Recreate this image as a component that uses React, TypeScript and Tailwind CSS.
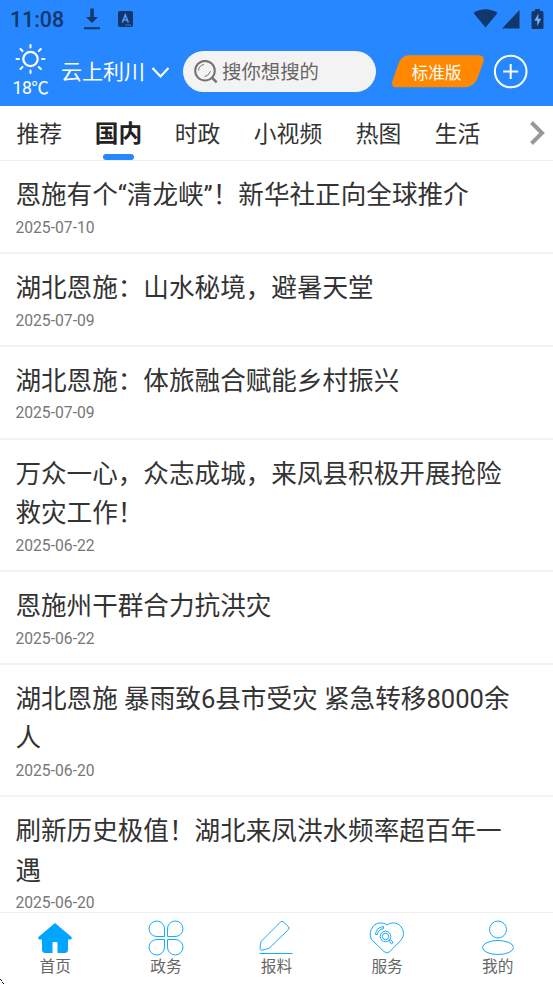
import { useState } from 'react';

const articles = [
  { title: '恩施有个“清龙峡”！新华社正向全球推介', date: '2025-07-10' },
  { title: '湖北恩施：山水秘境，避暑天堂', date: '2025-07-09' },
  { title: '湖北恩施：体旅融合赋能乡村振兴', date: '2025-07-09' },
  { title: '万众一心，众志成城，来凤县积极开展抢险救灾工作！', date: '2025-06-22' },
  { title: '恩施州干群合力抗洪灾', date: '2025-06-22' },
  { title: '湖北恩施 暴雨致6县市受灾 紧急转移8000余人', date: '2025-06-20' },
  { title: '刷新历史极值！湖北来凤洪水频率超百年一遇', date: '2025-06-20' },
];

const categories = ['推荐', '国内', '时政', '小视频', '热图', '生活'];

function StatusBar() {
  return (
    <div className="flex h-[38px] items-center pl-[10px] pr-[9px] text-[#12376b]">
      <span className="w-[74px] pt-px text-[21.3px] font-medium leading-[38px]">11:08</span>
      <svg width="16" height="22" viewBox="0 0 16 22" fill="currentColor">
        <path d="M6.300 .5h3.500v8.500H14l-6 6-6-6h4.300zM0 19.200h16v2H0z" />
      </svg>
      <svg className="ml-[18px]" width="16" height="17" viewBox="0 0 16 17">
        <rect x="0" y="0" width="15" height="16" rx="1.800" fill="currentColor" />
        <path d="M4.300 11.500 7.300 4 10.300 11.500M5.500 9h3.700" fill="none" stroke="#4d9bff" strokeWidth="1.600" />
        <path d="M7.500 14h6" stroke="#4d9bff" strokeDasharray="1.300 .7" />
      </svg>
      <div className="flex-1" />
      <svg width="25" height="20" viewBox="0 0 25 20" fill="currentColor">
        <path d="M.5 4C7.500 -1 17.500 -1 24.500 4L12.500 18.500z" />
      </svg>
      <svg className="ml-[4px]" width="18" height="19" viewBox="0 0 18 19" fill="currentColor">
        <path d="M17.500 0v18.500H0z" />
      </svg>
      <svg className="ml-[11px]" width="13" height="21" viewBox="0 0 13 21">
        <path d="M4 0h5v2h2q1.500 0 1.500 1.500v15q0 1.500-1.500 1.500H2Q.5 20 .5 18.500V3.500Q.5 2 2 2h2z" fill="currentColor" />
        <path d="M7.500 4.500 3.300 11.800h2.900v5.500l3.900-7.600H7.300z" fill="#70b0ff" />
      </svg>
    </div>
  );
}

function SunIcon() {
  return (
    <svg width="32" height="32" viewBox="-16 -16 32 32" fill="none" stroke="white" strokeLinecap="round">
      <circle cx="-0.500" r="7.200" strokeWidth="2.200" />
      <path
        strokeWidth="2"
        d="M-.5-14v2.500M-.5 11.500v2.500M-14.500 0h2.500M11 0h2.500M-10.500-10l2 2M7.800 8l2 2M-10.500 10l2-2M7.800-8l2-2"
      />
    </svg>
  );
}

function Header() {
  return (
    <header className="h-[106px] shrink-0 bg-[#2787ff] text-white">
      <StatusBar />
      <div className="flex h-[68px] items-start">
        <div className="ml-[8px] flex w-[45px] flex-col items-center pt-[5px]">
          <SunIcon />
          <span className="mt-px text-[17.6px] leading-[24px] tracking-[-0.5px]">18℃</span>
        </div>
        <span className="ml-[8px] mt-[18px] w-[90px] whitespace-nowrap text-[21px] leading-[32px]">云上利川</span>
        <svg className="mt-[28px]" width="18" height="13" viewBox="0 0 18 13" fill="none" stroke="white" strokeWidth="2.200">
          <path d="M1.500 2 9.500 10.500 17.500 2" />
        </svg>
        <div className="ml-[14px] mt-[13px] flex h-[41px] w-[193px] items-center rounded-full bg-[#f3f3f3] pl-[11px] text-[#666]">
          <svg width="24" height="24" viewBox="0 0 24 24" fill="none" stroke="#737373">
            <circle cx="11" cy="10.700" r="9.800" strokeWidth="2" />
            <path d="m18 17.700 4.700 4.700" strokeWidth="2.500" />
            <path d="M4.500 10.500q.5-5 5.500-6M10.500 16.700q4.500-1 6-5.500" strokeWidth="1" />
          </svg>
          <span className="ml-[4px] pt-[3px] text-[19.400px] leading-[28px]">搜你想搜的</span>
        </div>
        <div className="relative ml-[15px] mt-[17px] h-[33px] w-[93px]">
          <svg className="absolute inset-0" width="93" height="33" viewBox="0 0 93 33" fill="#ff8800">
            <path d="M18 .3H87Q94.500.3 92.300 7L87 22Q83 32.300 73 32.300H6Q-.5 32.300 1.600 25.500L7 10Q10 .3 18 .3z" />
          </svg>
          <span className="relative block pr-[2px] text-center text-[16.700px] leading-[37px]">标准版</span>
        </div>
        <svg className="ml-[9px] mt-[16px]" width="35" height="35" viewBox="0 0 35 35" fill="none" stroke="white" strokeWidth="2">
          <circle cx="17.700" cy="17.500" r="15.800" />
          <path d="M17.700 10v15M10.200 17.500h15" />
        </svg>
      </div>
    </header>
  );
}

function HomeIcon() {
  return (
    <svg width="36" height="36" viewBox="0 0 36 36" fill="#00a5ff">
      <path d="M18 3 34.500 17Q35.500 19.500 33 19.500H31V29.500Q31 33 27.500 33H20.500V23Q20.500 22 19.500 22H16.500Q15.500 22 15.500 23V33H8.500Q5 33 5 29.500V19.500H3Q.5 19.500 1.500 17z" />
    </svg>
  );
}

function CloverIcon() {
  return (
    <svg width="36" height="36" viewBox="0 0 36 36" fill="none" stroke="#18aaff">
      <path d="M16.500 16.500H9A7.750 7.750 0 1 1 16.500 9zM19.500 16.500V9A7.750 7.750 0 1 1 27 16.500zM16.500 19.500V27A7.750 7.750 0 1 1 9 19.500zM19.500 19.500H27A7.750 7.750 0 1 1 19.500 27z" />
    </svg>
  );
}

function PencilIcon() {
  return (
    <svg width="36" height="36" viewBox="0 0 36 36" fill="none" stroke="#18aaff">
      <path d="M3 21.500 22.500 2Q24 .5 25.500 2L30.500 6.800Q31.500 8 30.500 9.500L12 27.500Q10.500 29 7.500 29.200L3.500 30.200Q2 30.300 2 28.500z" />
      <path d="M1.500 33.500h33" />
    </svg>
  );
}

function HeartIcon() {
  return (
    <svg width="36" height="36" viewBox="0 0 36 36" fill="none" stroke="#18aaff">
      <path d="M18 5C14 2 8 2.300 4.500 6Q-1 12.500 2.500 19.500L15 31.500Q18 34.500 21 31.500L32.500 19.500Q37 12.500 31.500 6C28 2.300 22 2 18 5z" />
      <circle cx="16.500" cy="16.500" r="5.300" />
      <circle cx="16.500" cy="16.500" r="3.200" />
      <path d="m20 20 1.500 3q1.500 1.500 2.300 0l-.3-1.500-2.500-2M6.500 14.500Q7 7.500 14.500 6.500V8.500Q9 9.500 8.500 14.500z" />
    </svg>
  );
}

function ProfileIcon() {
  return (
    <svg width="36" height="36" viewBox="0 0 36 36" fill="none" stroke="#18aaff">
      <circle cx="18" cy="9.500" r="8.500" />
      <ellipse cx="18" cy="27.500" rx="15.500" ry="7" />
    </svg>
  );
}

const navItems = [
  { label: '首页', icon: HomeIcon },
  { label: '政务', icon: CloverIcon },
  { label: '报料', icon: PencilIcon },
  { label: '服务', icon: HeartIcon },
  { label: '我的', icon: ProfileIcon },
];

export default function App() {
  const [active, setActive] = useState('国内');

  return (
    <div className="relative flex h-[984px] w-[553px] flex-col overflow-hidden bg-white font-[Roboto,'Noto_Sans_CJK_SC',sans-serif]">
      <Header />

      {/* Category tabs */}
      <nav className="flex h-[55px] shrink-0 items-start border-b border-[#ececec] pl-[16.500px] text-[22.8px] text-[#333]">
        <div className="flex flex-1 gap-[33.500px]">
          {categories.map((name) => (
            <button
              key={name}
              onClick={() => setActive(name)}
              className={
                'flex h-[54px] flex-col items-center whitespace-nowrap leading-[57px] ' +
                (name === active ? 'w-[45.6px] text-[23.700px] font-bold text-[#222]' : '')
              }
            >
              <span className="h-[48px]">{name}</span>
              {name === active && <span className="h-[6px] w-[31px] shrink-0 rounded-full bg-[#2787ff]" />}
            </button>
          ))}
        </div>
        <svg className="mr-[7px] mt-[14px]" width="17" height="26" viewBox="0 0 17 26" fill="none" stroke="#999" strokeWidth="4">
          <path d="M2.500 2.500 13 13 2.500 23.500" />
        </svg>
      </nav>

      {/* Article list */}
      <main className="min-h-0 flex-1 overflow-hidden pt-[0.400px]">
        {articles.map((item) => (
          <article key={item.title} className="border-b-2 border-[#f3f3f3] pb-[12px] pl-[15.4px] pr-[30px] pt-[14.900px]">
            <h2 className="text-[25.600px] leading-[39.650px] text-[#333]">{item.title}</h2>
            <p className="text-[15.700px] leading-[24.200px] text-[#777]">{item.date}</p>
          </article>
        ))}
      </main>

      {/* Bottom navigation */}
      <footer className="flex h-[72px] shrink-0 border-t border-[#eee] bg-white">
        {navItems.map(({ label, icon: Icon }) => (
          <div key={label} className="flex flex-1 flex-col items-center pt-[7px]">
            <Icon />
            <span className="text-[15.700px] leading-[22px] text-[#666]">{label}</span>
          </div>
        ))}
      </footer>

      <svg className="absolute bottom-0 left-0" width="5" height="5" viewBox="0 0 5 5" stroke="#111">
        <path d="M0 .5h1M1 1.500h1M2 3.500h1M3 4.500h1" />
      </svg>
    </div>
  );
}
